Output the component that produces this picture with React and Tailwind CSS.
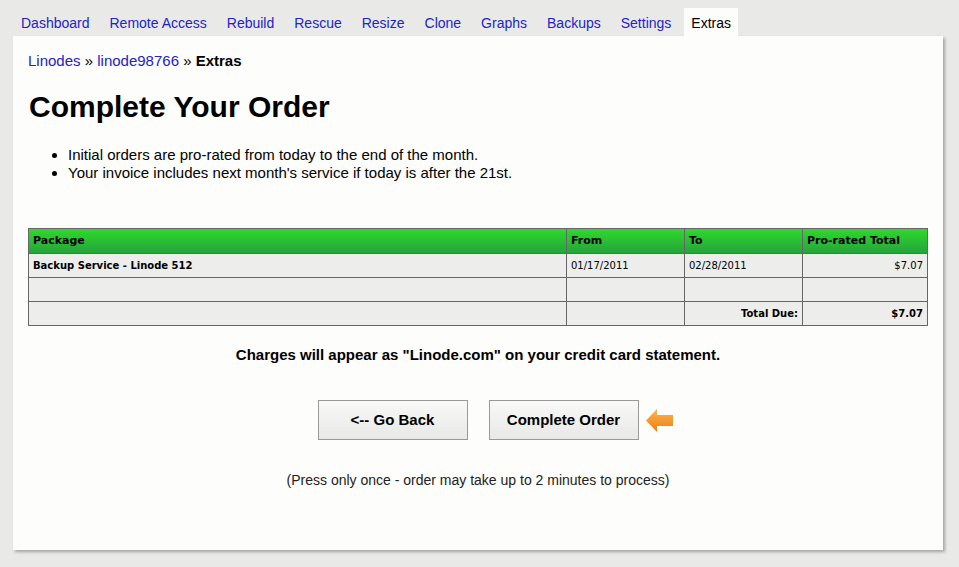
const TABS = ['Dashboard', 'Remote Access', 'Rebuild', 'Rescue', 'Resize', 'Clone', 'Graphs', 'Backups', 'Settings'];

function Arrow() {
  return (
    <svg width="29" height="25" viewBox="0 0 29 25">
      <defs>
        <linearGradient id="ar" x1="0" y1="0" x2="0" y2="1">
          <stop offset="0" stopColor="#fbb650" />
          <stop offset="1" stopColor="#ee7d12" />
        </linearGradient>
      </defs>
      <path d="M1 12.5 L12 1 L12 7 L28 7 L28 18 L12 18 L12 24 Z" fill="url(#ar)" />
    </svg>
  );
}

export default function App() {
  return (
    <div className="min-h-[567px] w-[959px] bg-[#e9eae8] pt-[8px] font-['Liberation_Sans',Arial,sans-serif] text-black">
      <div className="flex h-[28px] pl-[14px] gap-[6px] text-[14px]">
        {TABS.map(t => (
          <div key={t} className="flex items-center px-[7px] pt-[2px] text-[#2222cc]">{t}</div>
        ))}
        <div className="flex items-center bg-[#fdfdfb] px-[7px] pt-[2px]">Extras</div>
      </div>

      <div className="ml-[13px] w-[930px] h-[514px] bg-[#fdfdfb] shadow-[2px_2px_3px_rgba(0,0,0,0.3)] px-[15px] pt-[16px]">
        <div className="text-[15px] leading-[18px]">
          <span className="text-[#2222cc]">Linodes</span>
          <span> » </span>
          <span className="text-[#2222cc]">linode98766</span>
          <span> » </span>
          <span className="font-bold">Extras</span>
        </div>

        <h1 className="mt-[20px] text-[30px] font-bold leading-[34px] pl-[1px]">Complete Your Order</h1>

        <ul className="mt-[22px] pl-[40px] list-disc text-[15px] leading-[18px]">
          <li>Initial orders are pro-rated from today to the end of the month.</li>
          <li>Your invoice includes next month's service if today is after the 21st.</li>
        </ul>

        <table className="mt-[46px] w-[900px] border-collapse font-['DejaVu_Sans',Verdana,sans-serif] text-[10px]">
          <thead>
            <tr className="h-[25px] bg-gradient-to-b from-[#2fd92b] to-[#25a23a] text-left text-[11px]">
              <th className="w-[538px] border border-[#666] px-[4px] font-bold">Package</th>
              <th className="w-[118px] border border-[#666] px-[4px] font-bold">From</th>
              <th className="w-[118px] border border-[#666] px-[4px] font-bold">To</th>
              <th className="border border-[#666] px-[4px] font-bold">Pro-rated Total</th>
            </tr>
          </thead>
          <tbody className="bg-[#ededeb]">
            <tr className="h-[24px]">
              <td className="border border-[#666] px-[4px] font-bold">Backup Service - Linode 512</td>
              <td className="border border-[#666] px-[4px]">01/17/2011</td>
              <td className="border border-[#666] px-[4px]">02/28/2011</td>
              <td className="border border-[#666] px-[4px] text-right">$7.07</td>
            </tr>
            <tr className="h-[24px]">
              <td className="border border-[#666]"></td>
              <td className="border border-[#666]"></td>
              <td className="border border-[#666]"></td>
              <td className="border border-[#666]"></td>
            </tr>
            <tr className="h-[24px]">
              <td className="border border-[#666]"></td>
              <td className="border border-[#666]"></td>
              <td className="border border-[#666] px-[4px] text-right font-bold">Total Due:</td>
              <td className="border border-[#666] px-[4px] text-right font-bold">$7.07</td>
            </tr>
          </tbody>
        </table>

        <p className="mt-[20px] text-center text-[15px] font-bold leading-[18px]">
          Charges will appear as "Linode.com" on your credit card statement.
        </p>

        <div className="mt-[36px] flex items-center justify-center gap-[21px] pl-[35px]">
          <button className="h-[40px] w-[150px] border border-[#999] bg-gradient-to-b from-[#f9f9f8] to-[#e8e8e6] text-[15px] font-bold">
            &lt;-- Go Back
          </button>
          <div className="flex items-center gap-[6px]">
            <button className="h-[40px] w-[150px] border border-[#999] bg-gradient-to-b from-[#f9f9f8] to-[#e8e8e6] text-[15px] font-bold">
              Complete Order
            </button>
            <Arrow />
          </div>
        </div>

        <p className="mt-[31px] text-center text-[14px] leading-[18px] text-[#222]">
          (Press only once - order may take up to 2 minutes to process)
        </p>
      </div>
    </div>
  );
}
